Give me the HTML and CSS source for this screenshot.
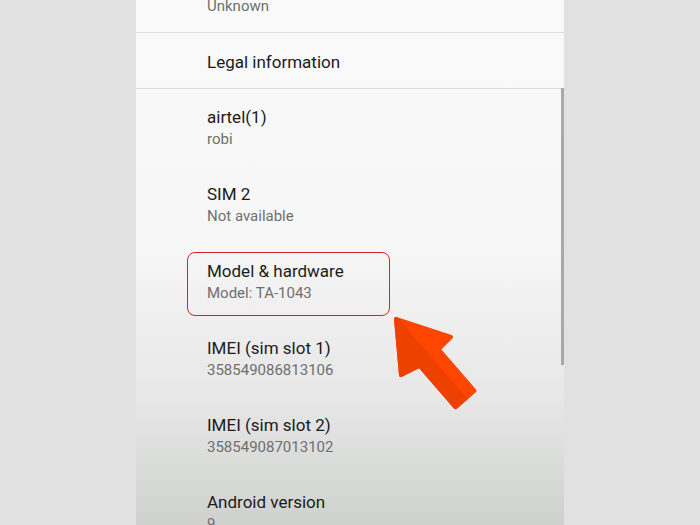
FILE: index.html
```html
<!DOCTYPE html>
<html>
<head>
<meta charset="utf-8">
<link rel="stylesheet" href="styles.css">
</head>
<body>
<div class="page">
  <div class="side"></div>
  <div class="screen">
    <div class="row first"><div class="sub">Unknown</div></div>
    <div class="divider"></div>
    <div class="row single"><div class="title">Legal information</div></div>
    <div class="divider"></div>
    <div class="row"><div class="title">airtel(1)</div><div class="sub">robi</div></div>
    <div class="row"><div class="title">SIM 2</div><div class="sub">Not available</div></div>
    <div class="row highlight"><div class="title">Model &amp; hardware</div><div class="sub">Model: TA-1043</div><div class="box"></div></div>
    <div class="row"><div class="title">IMEI (sim slot 1)</div><div class="sub">358549086813106</div></div>
    <div class="row"><div class="title">IMEI (sim slot 2)</div><div class="sub">358549087013102</div></div>
    <div class="row"><div class="title">Android version</div><div class="sub">9</div></div>
    <div class="scrollbar"></div>
    <svg class="arrow" width="95" height="105" viewBox="0 0 95 105">
      <polygon points="6,9 61,27 48.6,39.2 84.5,80.8 75,89 65.5,97.2 29.6,55.6 11,65" fill="#ff4600" stroke="#ff4600" stroke-width="4" stroke-linejoin="round"/>
      <polygon points="6,9 75,89 65.5,97.2 29.6,55.6 11,65" fill="#ec4100" stroke="#ec4100" stroke-width="4" stroke-linejoin="round"/>
    </svg>
  </div>
  <div class="side rest"></div>
</div>
</body>
</html>
```
FILE: styles.css
```css
html, body {
  margin: 0;
  padding: 0;
  background: #e1e1e1;
}
.page {
  display: flex;
  width: 700px;
  height: 525px;
  overflow: hidden;
}
.side {
  width: 136px;
  background: #e1e1e1;
}
.side.rest {
  flex: 1;
}
.screen {
  position: relative;
  width: 428px;
  height: 525px;
  overflow: hidden;
  background: linear-gradient(to bottom, #f8f9f8 0%, #f6f7f6 45%, #e6e7e6 76%, #cfd1cf 100%);
  font-family: Roboto, "Noto Sans", sans-serif;
}
.row {
  position: relative;
  padding: 17px 0 16px 71px;
}
.row.first {
  padding-top: 0;
  padding-bottom: 15px;
}
.row.first .sub {
  margin-top: -5px;
}
.row.single .title {
  position: relative;
  top: 1px;
}
.title {
  font-size: 17px;
  line-height: 22px;
  color: #1b1b1b;
}
.sub {
  font-size: 15px;
  line-height: 22px;
  color: #6f6f6f;
}
.divider {
  height: 1px;
  background: #dcdcdc;
}
.box {
  position: absolute;
  left: 51px;
  top: 9px;
  width: 201px;
  height: 62px;
  border: 1.5px solid #d8222d;
  border-radius: 8px;
}
.scrollbar {
  position: absolute;
  left: 425px;
  top: 88px;
  width: 3px;
  height: 277px;
  background: #a9a9a9;
}
.arrow {
  position: absolute;
  left: 254px;
  top: 310px;
}
```
